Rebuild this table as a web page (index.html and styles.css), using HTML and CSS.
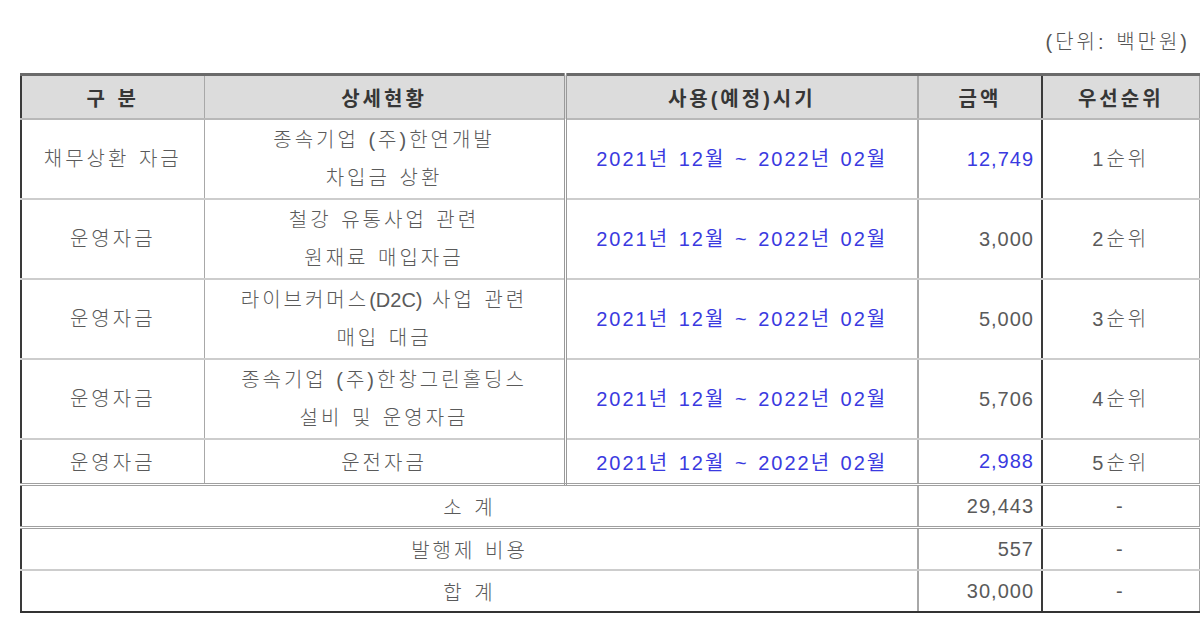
FILE: index.html
```html
<!DOCTYPE html>
<html lang="ko">
<head>
<meta charset="utf-8">
<link rel="stylesheet" href="styles.css">
</head>
<body>
<div class="page">
  <div class="unit">(단위: 백만원)</div>
  <table class="fund">
    <colgroup>
      <col class="c1"><col class="c2"><col class="c3"><col class="c4"><col class="c5">
    </colgroup>
    <thead>
      <tr class="head">
        <th class="b1">구 분</th>
        <th class="b2">상세현황</th>
        <th class="b3">사용(예정)시기</th>
        <th class="b4">금액</th>
        <th class="b5">우선순위</th>
      </tr>
    </thead>
    <tbody>
      <tr class="tall">
        <td class="b1">채무상환 자금</td>
        <td class="b2">종속기업 (주)한연개발<br>차입금 상환</td>
        <td class="b3 date">2021년 12월 ~ 2022년 02월</td>
        <td class="b4 num blue">12,749</td>
        <td class="b5">1순위</td>
      </tr>
      <tr class="tall">
        <td class="b1">운영자금</td>
        <td class="b2">철강 유통사업 관련<br>원재료 매입자금</td>
        <td class="b3 date">2021년 12월 ~ 2022년 02월</td>
        <td class="b4 num">3,000</td>
        <td class="b5">2순위</td>
      </tr>
      <tr class="tall">
        <td class="b1">운영자금</td>
        <td class="b2">라이브커머스<span class="latin">(D2C)</span> 사업 관련<br>매입 대금</td>
        <td class="b3 date">2021년 12월 ~ 2022년 02월</td>
        <td class="b4 num">5,000</td>
        <td class="b5">3순위</td>
      </tr>
      <tr class="tall">
        <td class="b1">운영자금</td>
        <td class="b2">종속기업 (주)한창그린홀딩스<br>설비 및 운영자금</td>
        <td class="b3 date">2021년 12월 ~ 2022년 02월</td>
        <td class="b4 num">5,706</td>
        <td class="b5">4순위</td>
      </tr>
      <tr class="short last">
        <td class="b1">운영자금</td>
        <td class="b2">운전자금</td>
        <td class="b3 date">2021년 12월 ~ 2022년 02월</td>
        <td class="b4 num blue">2,988</td>
        <td class="b5">5순위</td>
      </tr>
      <tr class="sum sub">
        <td class="b3" colspan="3">소 계</td>
        <td class="b4 num">29,443</td>
        <td class="b5">-</td>
      </tr>
      <tr class="sum fee">
        <td class="b3" colspan="3">발행제 비용</td>
        <td class="b4 num">557</td>
        <td class="b5">-</td>
      </tr>
      <tr class="sum total">
        <td class="b3" colspan="3">합 계</td>
        <td class="b4 num">30,000</td>
        <td class="b5">-</td>
      </tr>
    </tbody>
  </table>
</div>
</body>
</html>
```

FILE: styles.css
```css
html, body {
  margin: 0;
  padding: 0;
  background: #ffffff;
  overflow: hidden;
}

body {
  width: 1200px;
  height: 630px;
  font-family: "Liberation Sans", "Noto Sans CJK KR", sans-serif;
  font-size: 20px;
  font-weight: 300;
  color: #5a5a5a;
  letter-spacing: 3px;
  word-spacing: 1px;
}

.page {
  padding-left: 20px;
  width: 1180px;
}

.unit {
  height: 73px;
  box-sizing: border-box;
  padding-top: 30px;
  padding-right: 10px;
  line-height: 24px;
  text-align: right;
  color: #555555;
}

.fund {
  border-collapse: collapse;
  table-layout: fixed;
  width: 1178px;
}

.c1 { width: 183px; }
.c2 { width: 361px; }
.c3 { width: 353px; }
.c4 { width: 124px; }
.c5 { width: 157px; }

.fund th,
.fund td {
  padding: 0;
  text-align: center;
  vertical-align: middle;
  border-bottom: 2px solid #cdcdcd;
}

.fund .b1 { border-left: 2px solid #3a3a3a; border-right: 1px solid #a8a8a8; }
.fund .b2 { border-right: 3px double #9a9a9a; }
.fund .b3 { border-right: 2px solid #a8a8a8; }
.fund .b4 { border-right: 2px solid #3a3a3a; }
.fund .b5 { border-right: 1px solid #a0a0a0; }
.fund .sum .b3 { border-left: 2px solid #3a3a3a; }

.head th {
  height: 42px;
  background: #dcdcdc;
  border-top: 3px solid #6a6a6a;
  border-bottom: 2px solid #b8b8b8;
  color: #363636;
  font-weight: 700;
}

.tall td {
  height: 78px;
  line-height: 38px;
}

.short td {
  height: 43px;
}

.last td {
  border-bottom: 3px double #a0a0a0;
}

.sum td {
  height: 40px;
}

.sub td {
  border-bottom: 3px double #a0a0a0;
}

.total td {
  border-bottom: 2px solid #333333;
}

.latin {
  letter-spacing: 0;
}

.date {
  color: #3a3ae0;
  font-weight: 400;
  letter-spacing: 2px;
  word-spacing: 2px;
}

.num {
  text-align: right !important;
  padding-right: 7px !important;
  letter-spacing: 1px;
}

.blue {
  color: #3a3ae0;
}
```
